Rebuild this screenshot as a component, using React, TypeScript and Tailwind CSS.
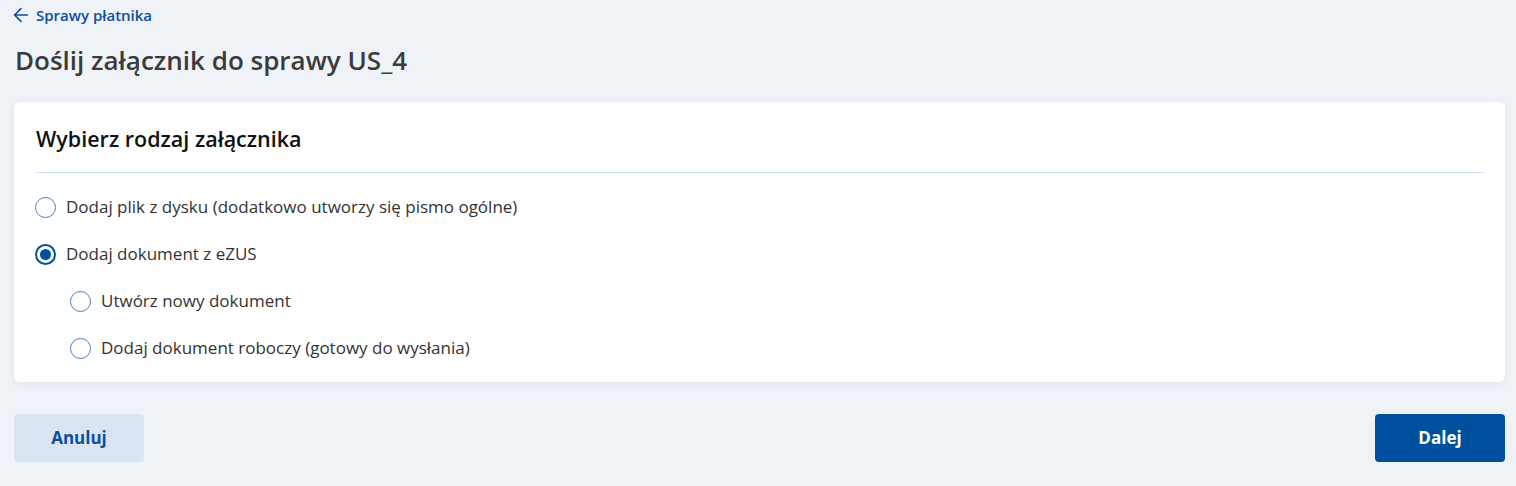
import { ArrowLeft } from "lucide-react";

type Option = { label: string; checked?: boolean; nested?: boolean };

const OPTIONS: Option[] = [
  { label: "Dodaj plik z dysku (dodatkowo utworzy się pismo ogólne)" },
  { label: "Dodaj dokument z eZUS", checked: true },
  { label: "Utwórz nowy dokument", nested: true },
  { label: "Dodaj dokument roboczy (gotowy do wysłania)", nested: true },
];

function Radio({ checked }: { checked?: boolean }) {
  return (
    <span
      className={
        "flex h-[21px] w-[21px] shrink-0 items-center justify-center rounded-full bg-white " +
        (checked ? "border-2 border-[#0050a0]" : "border border-[#4a7fc0]")
      }
    >
      {checked ? <span className="h-[11px] w-[11px] rounded-full bg-[#0050a0]" /> : null}
    </span>
  );
}

export default function App() {
  return (
    <div
      className="min-h-[486px] bg-[#eff3f8] pl-[14px] pr-[11px] pt-[5px] pb-[24px]"
      style={{ fontFamily: '"Open Sans", "Noto Sans", sans-serif' }}
    >
      <a className="flex h-[20px] items-center gap-[4px] text-[15px] font-semibold text-[#0a4f9e]">
        <ArrowLeft className="h-[22px] w-[22px] ml-[-4px] shrink-0" strokeWidth={1.7} />
        Sprawy płatnika
      </a>

      <h1 className="mt-[19px] pl-[1px] text-[26px] leading-[32px] font-semibold text-[#3b3b3b]">
        Doślij załącznik do sprawy US_4
      </h1>

      <div className="mt-[26px] rounded-[6px] bg-white px-[22px] pt-[23px] pb-[22px] shadow-[0_2px_8px_rgba(30,60,110,0.08)]">
        <h2 className="text-[21.5px] leading-[28px] font-semibold text-[#111111]">
          Wybierz rodzaj załącznika
        </h2>
        <div className="mt-[19px] h-px bg-[#d3e2f2]" />
        <div className="mt-[22px] flex flex-col gap-[23px]">
          {OPTIONS.map((o) => (
            <label
              key={o.label}
              className={"flex h-[24px] items-center gap-[10px] " + (o.nested ? "pl-[34px]" : "-ml-px")}
            >
              <Radio checked={o.checked} />
              <span className="text-[17px] leading-[24px] text-[#333333]">{o.label}</span>
            </label>
          ))}
        </div>
      </div>

      <div className="mt-[32px] flex items-center justify-between">
        <button
          type="button"
          className="h-[48px] w-[130px] rounded-[4px] bg-[#d9e5f3] text-[17px] font-bold text-[#0a4f9e]"
        >
          Anuluj
        </button>
        <button
          type="button"
          className="h-[48px] w-[130px] rounded-[4px] bg-[#0050a0] text-[17px] font-bold text-white"
        >
          Dalej
        </button>
      </div>
    </div>
  );
}
